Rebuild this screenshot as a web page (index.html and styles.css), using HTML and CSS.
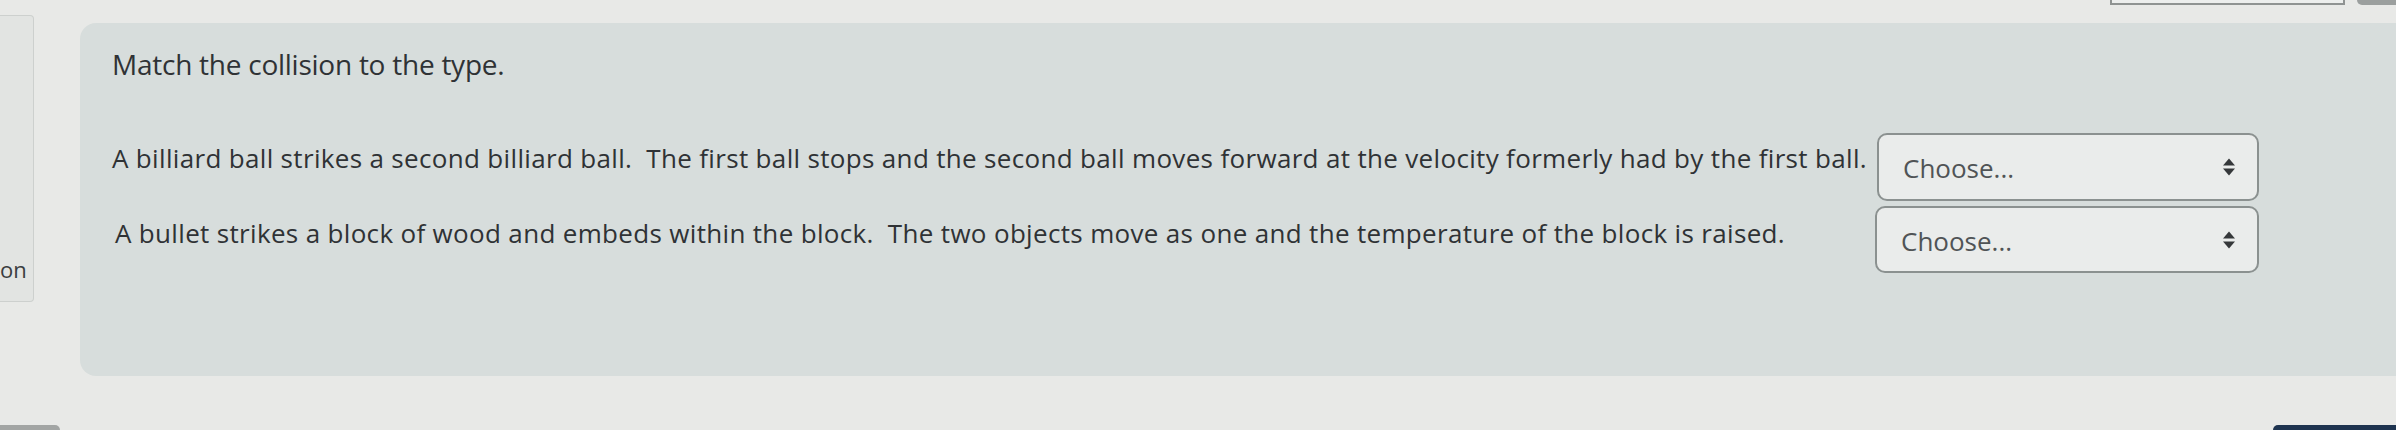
FILE: index.html
```html
<!DOCTYPE html>
<html lang="en">
<head>
<meta charset="utf-8">
<title>Match question</title>
<link rel="stylesheet" href="styles.css">
</head>
<body>
<div class="page">
  <div class="top-strip">
    <div class="top-box"></div>
    <div class="top-pill"></div>
  </div>
  <div class="content">
    <aside class="side-card">
      <span class="side-label">on</span>
    </aside>
    <main class="que">
      <div class="qtext">Match the collision to the type.</div>
      <div class="answer">
        <div class="stem stem-1">A billiard ball strikes a second billiard ball.&nbsp; The first ball stops and the second ball moves forward at the velocity formerly had by the first ball.</div>
        <div class="select">
          <span class="select-text">Choose...</span>
          <svg class="select-arrows" width="14" height="20" viewBox="0 0 14 20"><path d="M1 8.5 L7 1.5 L13 8.5 Z" fill="#35383a"/><path d="M1 11.5 L7 18.5 L13 11.5 Z" fill="#35383a"/></svg>
        </div>
        <div class="stem stem-2">A bullet strikes a block of wood and embeds within the block.&nbsp; The two objects move as one and the temperature of the block is raised.</div>
        <div class="select select-2">
          <span class="select-text">Choose...</span>
          <svg class="select-arrows" width="14" height="20" viewBox="0 0 14 20"><path d="M1 8.5 L7 1.5 L13 8.5 Z" fill="#35383a"/><path d="M1 11.5 L7 18.5 L13 11.5 Z" fill="#35383a"/></svg>
        </div>
      </div>
    </main>
  </div>
  <div class="bottom-strip">
    <div class="bottom-left"></div>
    <div class="bottom-right"></div>
  </div>
</div>
</body>
</html>
```
FILE: styles.css
```css
html, body {
  margin: 0;
  padding: 0;
}
body {
  background: #e8e9e7;
  font-family: "Open Sans", "Liberation Sans", sans-serif;
  color: #2f3235;
  width: 2396px;
  height: 430px;
  overflow: hidden;
}
.page {
  display: flex;
  flex-direction: column;
  height: 430px;
}
.top-strip {
  height: 5px;
  display: flex;
  align-items: flex-start;
  padding-left: 2110px;
  gap: 12px;
}
.top-box {
  width: 234px;
  height: 3px;
  border: 2px solid #8f9392;
  border-top: none;
  background: #eceeed;
}
.top-pill {
  width: 40px;
  height: 5px;
  background: #9b9f9e;
  border-bottom-left-radius: 6px;
}
.content {
  display: flex;
  align-items: flex-start;
  height: 371px;
}
.side-card {
  margin-top: 10px;
  width: 34px;
  height: 287px;
  box-sizing: border-box;
  background: #e2e4e2;
  border: 1px solid #cdd0ce;
  border-left: none;
  border-radius: 0 4px 4px 0;
  display: flex;
  justify-content: flex-start;
  align-items: flex-end;
  padding-left: 0;
  padding-bottom: 17px;
}
.side-label {
  font-size: 22px;
  line-height: 30px;
  color: #3a3d40;
  white-space: nowrap;
}
.que {
  margin-top: 18px;
  margin-left: 46px;
  flex: 1;
  height: 353px;
  box-sizing: border-box;
  background: #d7dddc;
  border-radius: 16px 0 0 16px;
  padding: 22px 0 0 32px;
}
.qtext {
  font-size: 28px;
  line-height: 39px;
  letter-spacing: -0.25px;
  white-space: nowrap;
}
.answer {
  margin-top: 49px;
  display: grid;
  grid-template-columns: 1756px 382px;
  column-gap: 9px;
  row-gap: 5px;
}
.stem {
  font-size: 26px;
  line-height: 36px;
  letter-spacing: 0.33px;
  white-space: nowrap;
  margin-top: 7px;
}
.stem-2 {
  margin-top: 9px;
  padding-left: 3px;
}
.select {
  height: 68px;
  box-sizing: border-box;
  border: 2px solid #8b9190;
  border-radius: 10px;
  background: #eaeceb;
  display: flex;
  align-items: center;
  justify-content: space-between;
  padding: 0 21px 0 24px;
}
.select-2 {
  margin-left: -2px;
  height: 67px;
}
.select-text {
  font-size: 26px;
  line-height: 36px;
  color: #505456;
  padding-top: 2px;
}
.select-arrows {
  display: block;
}
.bottom-strip {
  margin-top: 49px;
  height: 5px;
  display: flex;
  justify-content: space-between;
}
.bottom-left {
  width: 60px;
  height: 5px;
  background: #a2a5a4;
  border-top-right-radius: 6px;
}
.bottom-right {
  width: 123px;
  height: 5px;
  background: #1e3450;
  border-top-left-radius: 8px;
}
```
